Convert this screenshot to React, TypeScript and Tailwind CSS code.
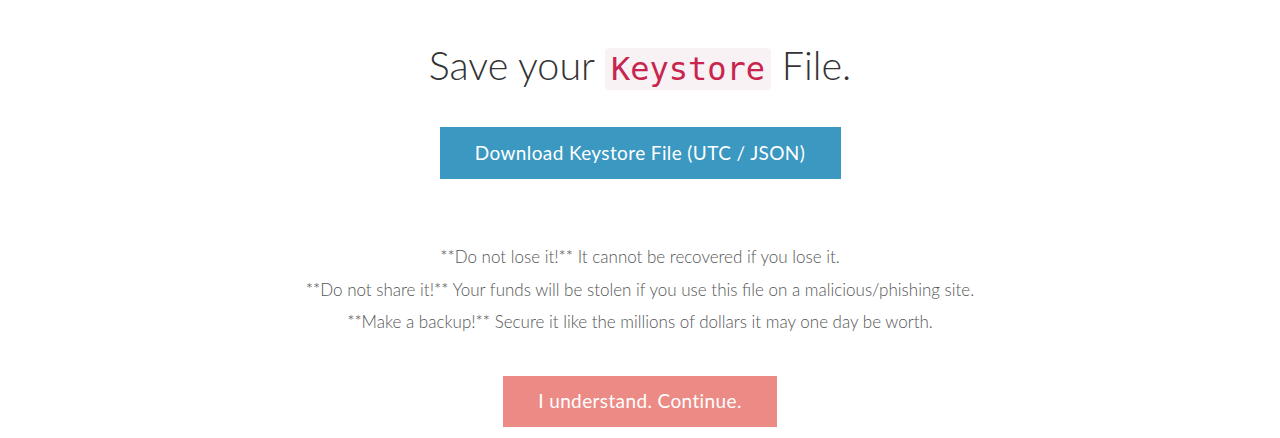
export default function App() {
  return (
    <div className="min-h-screen bg-white font-['Lato','Liberation_Sans',sans-serif] text-center">
      <div className="flex flex-col items-center pt-[39px]">
        <h1 className="text-[39.5px] font-light leading-[52px] text-[#333]">
          Save your{' '}
          <code className="font-['DejaVu_Sans_Mono',monospace] text-[32px] text-[#c7254e] bg-[#f9f2f4] px-[6px] py-[2px] rounded-sm">
            Keystore
          </code>{' '}
          File.
        </h1>

        <button className="mt-[32px] h-[52px] w-[401px] bg-[#3a98c1] text-white text-[19px] tracking-[0.02em]">
          Download Keystore File (UTC / JSON)
        </button>

        <div className="mt-[66px] flex flex-col gap-[8px] text-[17px] font-light leading-[24.5px] text-[#555]">
          <p>**Do not lose it!** It cannot be recovered if you lose it.</p>
          <p>**Do not share it!** Your funds will be stolen if you use this file on a malicious/phishing site.</p>
          <p>**Make a backup!** Secure it like the millions of dollars it may one day be worth.</p>
        </div>

        <button className="mt-[41px] h-[51px] w-[274px] bg-[#ec8b86] text-white text-[19px] tracking-[0.02em]">
          I understand. Continue.
        </button>
      </div>
    </div>
  );
}
